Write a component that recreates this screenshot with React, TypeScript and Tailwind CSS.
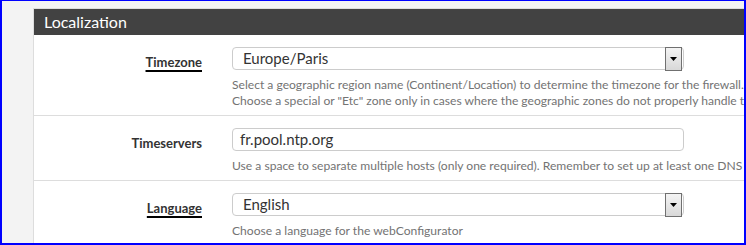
import React from 'react';

const font = { fontFamily: 'Lato, "Open Sans", sans-serif' };

function SelectBox({ value }: { value: string }) {
  return (
    <div className="relative h-[23px] w-[452px] rounded-[4px] border border-[#cccccc] bg-white">
      <span className="absolute left-[10px] top-0 text-[15px] leading-[21px] text-[#333333]">{value}</span>
      <div className="absolute right-[1px] top-[-1px] flex h-[24px] w-[17px] items-center justify-center border border-[#707070] bg-gradient-to-b from-[#f4f4f4] to-[#d8d8d8]">
        <svg width="7" height="4" viewBox="0 0 7 4">
          <path d="M0 0 H7 L3.5 4 Z" fill="#000" />
        </svg>
      </div>
    </div>
  );
}

function TextBox({ value }: { value: string }) {
  return (
    <div className="h-[23px] w-[452px] rounded-[4px] border border-[#cccccc] bg-white pl-[7px] text-[15px] leading-[21px] text-[#333333]">
      {value}
    </div>
  );
}

function Row({
  label,
  underline,
  children,
  help,
  last,
}: {
  label: string;
  underline?: boolean;
  children: React.ReactNode;
  help: string[];
  last?: boolean;
}) {
  return (
    <div className={`flex pt-[12px] pb-[6px] ${last ? '' : 'border-b border-[#dddddd]'}`}>
      <div className="w-[168px] shrink-0 pt-[2px] text-right">
        <span
          className={`text-[13px] font-bold leading-[18px] text-[#333333] ${
            underline ? 'underline decoration-[#000] decoration-2 underline-offset-[3px]' : ''
          }`}
        >
          {label}
        </span>
      </div>
      <div className="ml-[30px] flex flex-col">
        {children}
        <div className="mt-[7px] whitespace-nowrap text-[12.1px] leading-[16px] text-[#737373]">
          {help.map((h) => (
            <div key={h}>{h}</div>
          ))}
        </div>
      </div>
    </div>
  );
}

export default function App() {
  return (
    <div
      style={font}
      className="h-[245px] w-[746px] overflow-hidden border-t border-l-2 border-r-2 border-b-2 border-[#0000ff] bg-[#f3f3f3] pl-[31px] pt-[7px]"
    >
      <div className="w-[800px] border-l border-t border-[#dddddd] bg-white">
        <div className="flex h-[26px] items-center bg-[#424242] pl-[10px] text-[16px] text-white">
          Localization
        </div>
        <Row
          label="Timezone"
          underline
          help={[
            'Select a geographic region name (Continent/Location) to determine the timezone for the firewall.',
            'Choose a special or "Etc" zone only in cases where the geographic zones do not properly handle the clock offset required for this firewall.',
          ]}
        >
          <SelectBox value="Europe/Paris" />
        </Row>
        <Row
          label="Timeservers"
          help={[
            'Use a space to separate multiple hosts (only one required). Remember to set up at least one DNS server if a host name is entered here!',
          ]}
        >
          <TextBox value="fr.pool.ntp.org" />
        </Row>
        <Row label="Language" underline help={['Choose a language for the webConfigurator']} last>
          <SelectBox value="English" />
        </Row>
      </div>
    </div>
  );
}
